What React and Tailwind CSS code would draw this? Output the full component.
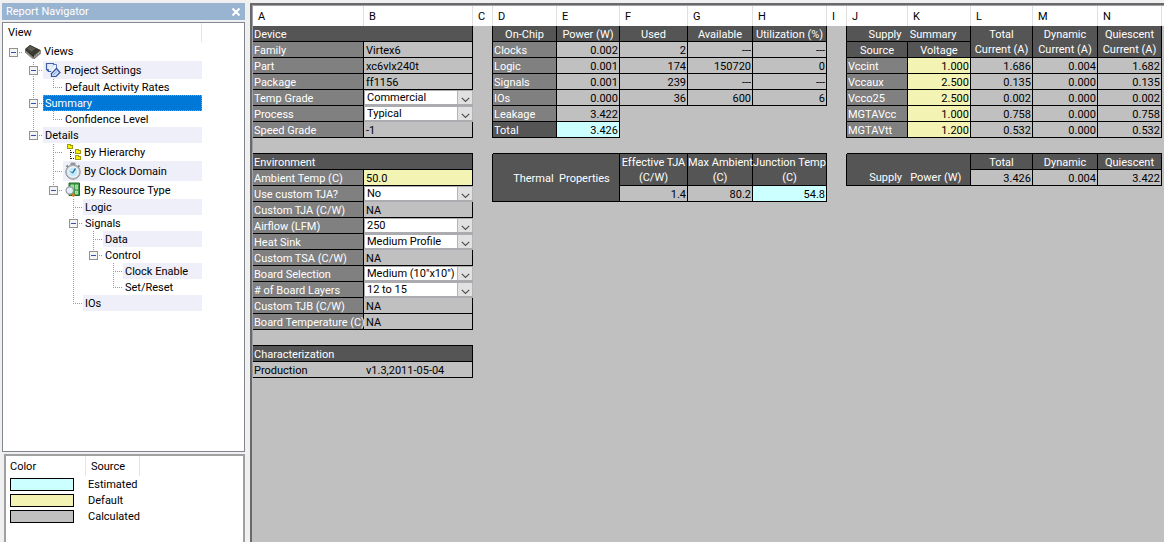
const TREE = [
  { label: 'Views', guides: 'n', icon: 'chip', h: 'h-[19px]' },
  { label: 'Project Settings', guides: ' +', icon: 'project', h: 'h-[18px]' },
  { label: 'Default Activity Rates', guides: ' |L', h: 'h-4' },
  { label: 'Summary', guides: ' +', h: 'h-4', selected: true },
  { label: 'Confidence Level', guides: ' |L', h: 'h-4' },
  { label: 'Details', guides: ' l', h: 'h-4' },
  { label: 'By Hierarchy', guides: '  T', icon: 'hierarchy', h: 'h-[18px]' },
  { label: 'By Clock Domain', guides: '  T', icon: 'clock', h: 'h-5' },
  { label: 'By Resource Type', guides: '  l', icon: 'resource', h: 'h-[18px]' },
  { label: 'Logic', guides: '   T', h: 'h-4' },
  { label: 'Signals', guides: '   +', h: 'h-4' },
  { label: 'Data', guides: '   |T', h: 'h-4' },
  { label: 'Control', guides: '   |l', h: 'h-4' },
  { label: 'Clock Enable', guides: '   | T', h: 'h-4' },
  { label: 'Set/Reset', guides: '   | L', h: 'h-4' },
  { label: 'IOs', guides: '   L', h: 'h-4' },
];

function Icon({ name }) {
  if (name === 'chip')
    return (
      <svg width="16" height="16" viewBox="0 0 16 16" className="shrink-0" aria-hidden="true">
        <path d="M0 5 L5 1 L16 6.5 V9.5 L9.5 15 L7 14.5 L0 8.5 Z" fill="#77756c" />
        <path d="M0.5 4.8 L5 1 L15.5 6 L9 11.5 Z" fill="#3a3932" />
        <path d="M2 4.5 L5.2 2 L10.5 4.6 L6.5 7.8 Z" fill="#5c5b52" />
        <path d="M0.5 6 L8.5 13 L9.5 12 L1 5.2 Z" fill="#24231f" />
        <path d="M9.5 12.8 L16 7.3" stroke="#c4c2b8" strokeWidth="1.2" strokeDasharray="1.2 1" fill="none" />
        <path d="M1 8.2 L7.5 13.8" stroke="#b0aea4" strokeWidth="1" strokeDasharray="1.2 1" fill="none" />
      </svg>
    );
  if (name === 'project')
    return (
      <svg width="16" height="16" viewBox="0 0 16 16" className="shrink-0" aria-hidden="true">
        <path d="M1.5 1.5 H8.5 V9.5 H3.5 L1.5 7.5 Z" fill="#e4ecfa" stroke="#3f5fa8" strokeWidth="1.2" />
        <path d="M3.5 9.5 V7.5 H1.5" fill="none" stroke="#3f5fa8" />
        <path d="M8.5 2.5 H11.5 V9 L8 11.5 L5.5 11.5" fill="#eef3fd" stroke="#5878bc" />
        <path d="M11.5 6.5 L15 10.5 L11 14.5 L6.5 14.5 L6.5 11.5 Z" fill="#cfdff8" stroke="#34549e" strokeWidth="1.2" />
        <path d="M8 13 L12 9.5" stroke="#8ea8dc" />
      </svg>
    );
  if (name === 'hierarchy')
    return (
      <svg width="16" height="16" viewBox="0 0 16 16" className="shrink-0" aria-hidden="true" shapeRendering="crispEdges">
        <path d="M5.5 6 V15 M5.5 8.5 H10 M5.5 14.5 H10" stroke="#202020" strokeDasharray="1 1" fill="none" />
        <g fill="#f8f400" stroke="#a09a10">
          <path d="M2.5 0.5 h3 v1 h2 v3 h-5 Z" />
          <path d="M10.5 5.5 h3 v1 h2 v3 h-5 Z" />
          <path d="M10.5 11.5 h3 v1 h2 v3 h-5 Z" />
        </g>
      </svg>
    );
  if (name === 'clock')
    return (
      <svg width="16" height="18" viewBox="0 0 16 18" className="shrink-0" aria-hidden="true">
        <rect x="5.5" y="0.5" width="5" height="3" rx="1" fill="#94989c" />
        <path d="M1.5 3.5 l2 2 M14.5 3.5 l-2 2" stroke="#84888c" strokeWidth="2" />
        <circle cx="8" cy="10" r="7.2" fill="#c4c9cc" stroke="#8b9094" strokeWidth="1" />
        <circle cx="8" cy="10" r="5.2" fill="#c4e9f8" stroke="#f2f7fa" strokeWidth="1.2" />
        <path d="M7.5 11 L10.5 6.5" stroke="#2a78a8" strokeWidth="1.4" />
        <path d="M7.5 11 L5.5 9.5" stroke="#2a78a8" />
      </svg>
    );
  return (
    <svg width="16" height="16" viewBox="0 0 16 16" className="shrink-0" aria-hidden="true">
      <path d="M4 1 H14.5 V13.5 H4 Z" fill="#3f9a48" stroke="#236a2c" />
      <path d="M6 3 h2.5 v3 h-2.5 Z M10.5 3 h2 v4 h-2 Z M10.5 9 h2 v3 h-2 Z" fill="#8ccc88" stroke="#cdebc8" strokeWidth="0.7" />
      <circle cx="4.8" cy="8.5" r="3.7" fill="#e2eefa" stroke="#959ca4" strokeWidth="1.3" />
      <path d="M7.5 11.5 L9 14.5" stroke="#d87a24" strokeWidth="2.6" />
    </svg>
  );
}

function Guide({ kind, label }) {
  const boxed = kind === '+' || kind === 'l' || kind === 'n';
  const up = kind !== 'n';
  const down = kind === '+' || kind === 'T' || kind === '|';
  const right = kind !== '|';
  const drawing = (
    <span className="flex h-full w-5 items-center">
      <svg width="20" height="20" viewBox="0 0 20 20" className="w-5 shrink-0" aria-hidden="true" shapeRendering="crispEdges">
        <g stroke="#9a9a9a" strokeDasharray="1 1" fill="none">
          {up && <path d="M10.5 0 V10" />}
          {down && <path d="M10.5 10 V20" />}
          {right && <path d="M10 10.5 H19" />}
        </g>
        {boxed && (
          <g>
            <rect x="6.5" y="6.5" width="8" height="8" fill="#f4f4f4" stroke="#919191" />
            <path d="M8 10.5 H13" stroke="#3450a8" />
          </g>
        )}
      </svg>
    </span>
  );
  return boxed ? (
    <button type="button" aria-label={`Collapse ${label}`} className="h-full w-5 shrink-0 overflow-hidden">
      {drawing}
    </button>
  ) : (
    <span className="h-full w-5 shrink-0 overflow-hidden">{drawing}</span>
  );
}

function TreeRow({ item, striped }) {
  const tone = item.selected
    ? 'bg-[#0078d7] text-white outline outline-dotted outline-1 -outline-offset-1 outline-[#e08a30]'
    : striped
      ? 'bg-[#efeff9]'
      : '';
  return (
    <li role="treeitem" aria-selected={!!item.selected} className={`flex ${item.h}`}>
      {[...item.guides].map((kind, i) =>
        kind === ' ' ? <span key={i} className="w-5 shrink-0" /> : <Guide key={i} kind={kind} label={item.label} />
      )}
      <span className={`flex min-w-0 flex-1 items-center gap-[3px] whitespace-nowrap pl-0.5 ${tone}`}>
        {item.icon && <Icon name={item.icon} />}
        <span className="pt-px">{item.label}</span>
      </span>
    </li>
  );
}

const LEGEND = [
  ['Estimated', 'bg-[#ccffff]'],
  ['Default', 'bg-[#f3f3b4]'],
  ['Calculated', 'bg-[#c0c0c0]'],
];

function Navigator() {
  return (
    <aside className="flex w-[245px] shrink-0 flex-col pl-0.5 pt-[3px]">
      <header className="flex h-[17px] items-center justify-between bg-[#99b4d1] pl-1 pr-[3px] text-white">
        <h1 className="pt-px">Report Navigator</h1>
        <button type="button" aria-label="Close" className="flex size-3 items-center justify-center">
          <svg width="8" height="8" viewBox="0 0 8 8" aria-hidden="true">
            <path d="M0.5 0.5 L7.5 7.5 M7.5 0.5 L0.5 7.5" stroke="#fff" strokeWidth="2" />
          </svg>
        </button>
      </header>
      <div className="mt-0.5 h-[430px] border border-[#828790] bg-white">
        <div className="w-[199px]">
          <div className="flex h-[19px] items-center border-r border-[#e5e5e5] pl-[5px] pt-px">View</div>
          <ul role="tree">
            {TREE.map((item, i) => (
              <TreeRow key={item.label} item={item} striped={i % 2 === 1} />
            ))}
          </ul>
        </div>
      </div>
      <section className="ml-0.5 mt-0.5 flex-1 border-2 border-b-0 border-[#a0a0a0] bg-white">
        <table className="w-[134px] table-fixed border-separate border-spacing-0 text-left leading-[15px]">
          <thead>
            <tr className="h-5">
              <th className="w-20 border-r border-[#e5e5e5] pl-1 pt-px font-normal">Color</th>
              <th className="w-[54px] border-r border-[#e5e5e5] pl-[5px] pt-px font-normal">Source</th>
            </tr>
          </thead>
          <tbody>
            {LEGEND.map(([name, color]) => (
              <tr key={name} className="h-4">
                <td className="pl-1">
                  <div className={`h-[13px] w-16 border border-black ${color}`} />
                </td>
                <td className="pl-0.5 pt-px">{name}</td>
              </tr>
            ))}
          </tbody>
        </table>
      </section>
    </aside>
  );
}

const STYLES = {
  title: 'bg-[#555555] text-white border-black border-b border-r',
  name: 'bg-[#808080] text-white border-black border-b border-r',
  calc: 'bg-[#c0c0c0] border-black border-b border-r',
  calcOpen: 'bg-[#c0c0c0] border-black border-b',
  est: 'bg-[#ccffff] border-black border-b border-r',
  def: 'bg-[#f3f3b4] border-black border-b border-r',
  gap: '',
  gapR: 'border-black border-r',
  gapB: 'border-black border-b',
};

const t = (text, span = 1, rows = 1) => ({ s: 'title', text, span, rows, align: 'text-center' });
const head = (text) => ({ s: 'title', text, span: 2, align: 'text-left' });
const n = (text) => ({ s: 'name', text, align: 'text-left' });
const v = (text) => ({ s: 'calc', text, align: 'text-left' });
const r = (text, s = 'calc') => ({ s, text, align: 'text-right' });
const sel = (label, value, ...more) => ({ s: 'gap', select: { label, options: [value, ...more] } });
const gap = (span = 1, s = 'gap') => ({ s, span });

const ROWS = [
  [head('Device'), gap(1, 'gapR'), t('On-Chip'), t('Power (W)'), t('Used'), t('Available'), t('Utilization (%)'), gap(1, 'gapR'),
    t('\u00a0\u00a0\u00a0Supply\u00a0\u00a0\u00a0Summary', 2), t('Total\nCurrent (A)', 1, 2), t('Dynamic\nCurrent (A)', 1, 2), t('Quiescent\nCurrent (A)', 1, 2)],
  [n('Family'), v('Virtex6'), gap(1, 'gapR'), n('Clocks'), r('0.002'), r('2'), r('---'), r('---'), gap(1, 'gapR'), t('Source'), t('Voltage')],
  [n('Part'), v('xc6vlx240t'), gap(1, 'gapR'), n('Logic'), r('0.001'), r('174'), r('150720'), r('0'), gap(1, 'gapR'), n('Vccint'), r('1.000', 'def'), r('1.686'), r('0.004'), r('1.682')],
  [n('Package'), v('ff1156'), gap(1, 'gapR'), n('Signals'), r('0.001'), r('239'), r('---'), r('---'), gap(1, 'gapR'), n('Vccaux'), r('2.500', 'def'), r('0.135'), r('0.000'), r('0.135')],
  [n('Temp Grade'), sel('Temp Grade', 'Commercial', 'Industrial'), gap(1, 'gapR'), n('IOs'), r('0.000'), r('36'), r('600'), r('6'), gap(1, 'gapR'), n('Vcco25'), r('2.500', 'def'), r('0.002'), r('0.000'), r('0.002')],
  [n('Process'), sel('Process', 'Typical', 'Maximum'), gap(1, 'gapR'), n('Leakage'), r('3.422'), gap(3), gap(1, 'gapR'), n('MGTAVcc'), r('1.000', 'def'), r('0.758'), r('0.000'), r('0.758')],
  [n('Speed Grade'), v('-1'), gap(1, 'gapR'), { ...t('Total'), align: 'text-left' }, r('3.426', 'est'), gap(3), gap(1, 'gapR'), n('MGTAVtt'), r('1.200', 'def'), r('0.532'), r('0.000'), r('0.532')],
  [gap(2, 'gapB'), gap(), gap(5, 'gapB'), gap(), gap(5, 'gapB')],
  [head('Environment'), gap(1, 'gapR'), t('\u00a0\u00a0\u00a0\u00a0Thermal\u00a0\u00a0Properties', 2, 3), t('Effective TJA\n(C/W)', 1, 2), t('Max Ambient\n(C)', 1, 2), t('Junction Temp\n(C)', 1, 2), gap(1, 'gapR'),
    { ...t('\u00a0\u00a0\u00a0\u00a0\u00a0Supply\u00a0\u00a0\u00a0Power (W)', 2, 2), bottom: true }, t('Total'), t('Dynamic'), t('Quiescent')],
  [n('Ambient Temp (C)'), { s: 'def', input: '50.0' }, gap(1, 'gapR'), gap(1, 'gapR'), r('3.426'), r('0.004'), r('3.422')],
  [n('Use custom TJA?'), sel('Use custom TJA?', 'No', 'Yes'), gap(1, 'gapR'), r('1.4'), r('80.2'), r('54.8', 'est'), gap(6)],
  [n('Custom TJA (C/W)'), v('NA'), gap(12)],
  [n('Airflow (LFM)'), sel('Airflow (LFM)', '250', '500'), gap(12)],
  [n('Heat Sink'), sel('Heat Sink', 'Medium Profile', 'High Profile'), gap(12)],
  [n('Custom TSA (C/W)'), v('NA'), gap(12)],
  [n('Board Selection'), sel('Board Selection', 'Medium (10"x10")', 'Small (4"x4")'), gap(12)],
  [n('# of Board Layers'), sel('# of Board Layers', '12 to 15', '8 to 11'), gap(12)],
  [n('Custom TJB (C/W)'), v('NA'), gap(12)],
  [n('Board Temperature (C)'), v('NA'), gap(12)],
  [gap(2, 'gapB'), gap(12)],
  [head('Characterization'), gap(12)],
  [{ s: 'calcOpen', text: 'Production', align: 'text-left' }, v('v1.3,2011-05-04'), gap(12)],
];

const COLUMNS = [
  ['A', 'w-[111px]'], ['B', 'w-[109px]'], ['C', 'w-5'], ['D', 'w-16'], ['E', 'w-[63px]'], ['F', 'w-[68px]'], ['G', 'w-[65px]'],
  ['H', 'w-[74px]'], ['I', 'w-5'], ['J', 'w-[61px]'], ['K', 'w-[63px]'], ['L', 'w-[62px]'], ['M', 'w-[65px]'], ['N', 'w-16'],
];

function Dropdown({ label, options }) {
  return (
    <div className="grid h-4 grid-cols-[1fr_16px] border-b-2 border-l border-t border-[#ababb0] bg-white">
      <select
        aria-label={label}
        className="col-span-2 col-start-1 row-start-1 h-[13px] w-full appearance-none bg-transparent pl-0.5 pt-px leading-3 outline-none"
      >
        {options.map((o) => (
          <option key={o}>{o}</option>
        ))}
      </select>
      <span className="pointer-events-none col-start-2 row-start-1 flex h-[13px] items-center justify-center border-x border-[#b4b4b8] bg-[#e1e1e1]">
        <svg width="9" height="6" viewBox="0 0 9 6" aria-hidden="true" className="mt-1">
          <path d="M0.8 0.8 L4.5 4.5 L8.2 0.8" stroke="#505050" strokeWidth="1.2" fill="none" />
        </svg>
      </span>
    </div>
  );
}

function Cell({ cell }) {
  const pad = cell.align === 'text-right' ? 'pr-px' : cell.align === 'text-left' ? (cell.s === 'calc' ? 'pl-0.5' : 'pl-px') : '';
  const leading = cell.select ? '' : cell.rows === 2 ? 'pt-px leading-[15px]' : 'pt-0.5 leading-[13px]';
  return (
    <td
      colSpan={cell.span || 1}
      rowSpan={cell.rows || 1}
      className={`whitespace-pre ${pad} ${leading} ${cell.align || ''} ${cell.bottom ? 'align-bottom' : 'align-middle'} ${STYLES[cell.s]}`}
    >
      {cell.select ? (
        <Dropdown {...cell.select} />
      ) : cell.input ? (
        <input aria-label="Ambient Temp (C)" defaultValue={cell.input} className="block h-[13px] w-full bg-transparent pl-0.5 outline-none" />
      ) : (
        cell.text
      )}
    </td>
  );
}

function Sheet() {
  return (
    <main className="mt-[3px] min-w-0 flex-1 overflow-hidden border-l-2 border-t-2 border-[#696969] bg-[#c0c0c0]">
      <div className="border-l border-t border-[#a0a0a8]">
        <div className="bg-[linear-gradient(white,white)] bg-[length:100%_20px] bg-no-repeat">
          <table className="w-[909px] table-fixed border-separate border-spacing-0">
            <thead>
              <tr className="h-5">
                {COLUMNS.map(([name, width]) => (
                  <th key={name} className={`${width} border-r border-[#e0e0e0] bg-white pl-[5px] pt-px text-left font-normal`}>
                    {name}
                  </th>
                ))}
              </tr>
            </thead>
            <tbody>
              {ROWS.map((cells, i) => (
                <tr key={i} className="h-4">
                  {cells.map((cell, j) => (
                    <Cell key={j} cell={cell} />
                  ))}
                </tr>
              ))}
            </tbody>
          </table>
        </div>
      </div>
    </main>
  );
}

export default function App() {
  return (
    <div className="flex min-h-screen gap-[5px] bg-[#f0f0f0] font-[Roboto,'Liberation_Sans',sans-serif] text-[11px] leading-4 text-black">
      <Navigator />
      <Sheet />
    </div>
  );
}
